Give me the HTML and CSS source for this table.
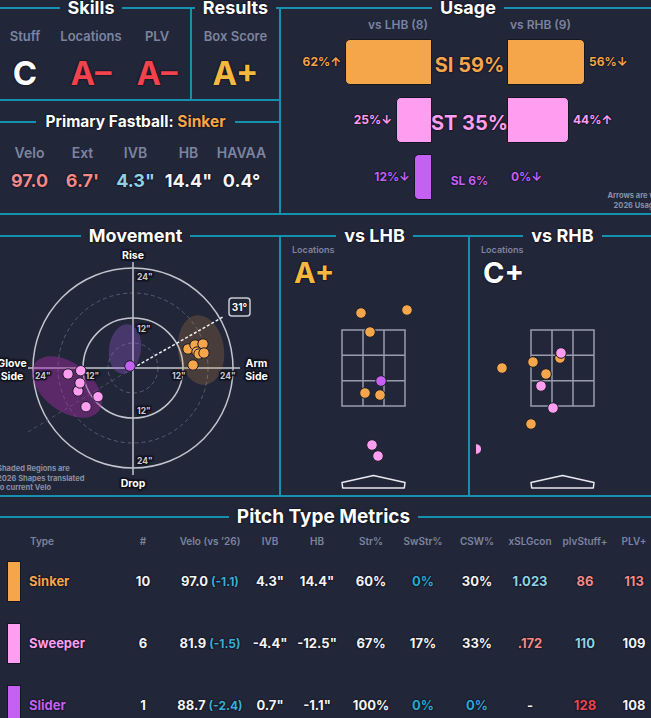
FILE: index.html
```html
<!DOCTYPE html>
<html>
<head>
<meta charset="utf-8">
<title>Pitching Summary</title>
<link rel="stylesheet" href="styles.css">
</head>
<body>
<div class="page">
  <div class="top">
    <div class="leftcol">
      <div class="grades">
        <fieldset class="box skills">
          <legend>Skills</legend>
          <div class="gcols">
            <div class="gcol"><div class="glabel">Stuff</div><div class="grade white">C</div></div>
            <div class="gcol"><div class="glabel">Locations</div><div class="grade red">A–</div></div>
            <div class="gcol"><div class="glabel">PLV</div><div class="grade red">A–</div></div>
          </div>
        </fieldset>
        <fieldset class="box results">
          <legend>Results</legend>
          <div class="gcols">
            <div class="gcol"><div class="glabel">Box Score</div><div class="grade gold">A+</div></div>
          </div>
        </fieldset>
      </div>
      <fieldset class="box primary">
        <legend>Primary Fastball: <span class="or">Sinker</span></legend>
        <div class="fcols">
          <div class="fcol"><div class="flabel">Velo</div><div class="fval salmon">97.0</div></div>
          <div class="fcol"><div class="flabel">Ext</div><div class="fval salmon">6.7'</div></div>
          <div class="fcol"><div class="flabel">IVB</div><div class="fval lblue">4.3"</div></div>
          <div class="fcol"><div class="flabel">HB</div><div class="fval">14.4"</div></div>
          <div class="fcol"><div class="flabel">HAVAA</div><div class="fval">0.4°</div></div>
        </div>
      </fieldset>
    </div>
    <fieldset class="box usage">
      <legend>Usage</legend>
      <div class="ugrid uhead">
        <div class="uside left"><span class="uh">vs LHB (8)</span></div>
        <div></div>
        <div class="uside right"><span class="uh">vs RHB (9)</span></div>
      </div>
      <div class="urows">
        <div class="ugrid urow">
          <div class="uside left"><span class="pct or">62%↑</span><div class="bar lb bg-or" style="width:87px"></div></div>
          <div class="ucenter big or">SI 59%</div>
          <div class="uside right"><div class="bar rb bg-or" style="width:78px"></div><span class="pct or">56%↓</span></div>
        </div>
        <div class="ugrid urow">
          <div class="uside left"><span class="pct pink">25%↓</span><div class="bar lb bg-pink" style="width:36px"></div></div>
          <div class="ucenter big pink">ST 35%</div>
          <div class="uside right"><div class="bar rb bg-pink" style="width:62px"></div><span class="pct pink">44%↑</span></div>
        </div>
        <div class="ugrid urow">
          <div class="uside left"><span class="pct purple">12%↓</span><div class="bar lb bg-purple" style="width:18px"></div></div>
          <div class="ucenter small purple">SL 6%</div>
          <div class="uside right"><div class="bar rb zero"></div><span class="pct purple">0%↓</span><div class="unote">Arrows are vs<br>2026 Usage</div></div>
        </div>
      </div>
    </fieldset>
  </div>

  <div class="mid">
    <fieldset class="box movement">
      <legend>Movement</legend>
      <svg class="mvsvg" width="287" height="249" viewBox="-8 246 287 249">
        <circle cx="133" cy="368" r="100" class="gs"/>
        <circle cx="133" cy="368" r="75" class="gd"/>
        <circle cx="133" cy="368" r="50" class="gs"/>
        <circle cx="133" cy="368" r="25" class="gd"/>
        <line x1="133" y1="262" x2="133" y2="475" class="gs"/>
        <line x1="28" y1="368" x2="240" y2="368" class="gs"/>
        <line x1="28" y1="432" x2="133" y2="368" class="gfaint"/>
        <ellipse cx="67" cy="387" rx="40" ry="24" transform="rotate(37 67 387)" class="sh-st"/>
        <ellipse cx="125" cy="349" rx="16" ry="25" transform="rotate(8 125 349)" class="sh-sl"/>
        <ellipse cx="201" cy="350" rx="23" ry="35" transform="rotate(-8 201 350)" class="sh-si"/>
        <line x1="133" y1="368" x2="223" y2="317" class="dash31"/>
        <rect x="229" y="298" width="21" height="18" rx="3" class="box31"/>
        <text x="239.5" y="310.7" class="t31">31°</text>
        <text x="137" y="280" class="tick">24"</text>
        <text x="137" y="331.5" class="tick">12"</text>
        <text x="137" y="414" class="tick">12"</text>
        <text x="137" y="464" class="tick">24"</text>
        <text x="35" y="379.3" class="tick">24"</text>
        <text x="85.5" y="379.3" class="tick">12"</text>
        <text x="172" y="379.3" class="tick">12"</text>
        <text x="220" y="379.3" class="tick">24"</text>
        <text x="133" y="259.3" class="axl mid-a">Rise</text>
        <text x="133" y="486.5" class="axl mid-a">Drop</text>
        <text x="12" y="366.7" class="axl mid-a">Glove</text>
        <text x="12" y="380" class="axl mid-a">Side</text>
        <text x="256.5" y="366.7" class="axl mid-a">Arm</text>
        <text x="256.5" y="380" class="axl mid-a">Side</text>
        <circle cx="188" cy="349" r="5.2" class="p-or"/>
        <circle cx="195" cy="345" r="5.2" class="p-or"/>
        <circle cx="203" cy="344" r="5.2" class="p-or"/>
        <circle cx="197" cy="352" r="5.2" class="p-or"/>
        <circle cx="199" cy="354" r="5.2" class="p-or"/>
        <circle cx="204" cy="353" r="5.2" class="p-or"/>
        <circle cx="193" cy="365" r="5.2" class="p-or"/>
        <circle cx="68" cy="374" r="5.2" class="p-pink"/>
        <circle cx="80.7" cy="370.7" r="5.2" class="p-pink"/>
        <circle cx="78" cy="391" r="5.2" class="p-pink"/>
        <circle cx="80" cy="383" r="5.2" class="p-pink"/>
        <circle cx="98" cy="396.7" r="5.2" class="p-pink"/>
        <circle cx="86" cy="406.7" r="5.2" class="p-pink"/>
        <circle cx="130" cy="366" r="5.3" class="p-purple"/>
        <text x="-3" y="470.8" class="foot">Shaded Regions are</text>
        <text x="-3" y="480.6" class="foot">2026 Shapes translated</text>
        <text x="-3" y="490.4" class="foot">to current Velo</text>
      </svg>
    </fieldset>
    <fieldset class="box lhb">
      <legend>vs LHB</legend>
      <div class="lochead">
        <div class="loclabel">Locations</div>
        <div class="locgrade gold">A+</div>
      </div>
      <svg class="locsvg" width="187" height="205" viewBox="281 290 187 205">
        <rect x="342" y="331" width="63" height="76" class="zone"/>
        <line x1="363" y1="331" x2="363" y2="407" class="zone"/>
        <line x1="384" y1="331" x2="384" y2="407" class="zone"/>
        <line x1="342" y1="356.3" x2="405" y2="356.3" class="zone"/>
        <line x1="342" y1="381.7" x2="405" y2="381.7" class="zone"/>
        <path d="M342 483.5 L373.5 476.5 L405 483.5 L404.3 489 L342.7 489 Z" class="plate"/>
        <circle cx="361" cy="314" r="5.3" class="p-or"/>
        <circle cx="407" cy="311" r="5.3" class="p-or"/>
        <circle cx="370" cy="333" r="5.3" class="p-or"/>
        <circle cx="365" cy="394" r="5.3" class="p-or"/>
        <circle cx="380" cy="396" r="5.3" class="p-or"/>
        <circle cx="381" cy="382" r="5.3" class="p-purple"/>
        <circle cx="372" cy="446" r="5.3" class="p-pink"/>
        <circle cx="378" cy="457" r="5.3" class="p-pink"/>
      </svg>
    </fieldset>
    <fieldset class="box rhb">
      <legend>vs RHB</legend>
      <div class="lochead">
        <div class="loclabel">Locations</div>
        <div class="locgrade white">C+</div>
      </div>
      <svg class="locsvg" width="185" height="205" viewBox="470 290 185 205">
        <defs><clipPath id="rclip"><rect x="476" y="290" width="179" height="205"/></clipPath></defs>
        <rect x="531" y="331" width="63" height="76" class="zone"/>
        <line x1="552" y1="331" x2="552" y2="407" class="zone"/>
        <line x1="573" y1="331" x2="573" y2="407" class="zone"/>
        <line x1="531" y1="356.3" x2="594" y2="356.3" class="zone"/>
        <line x1="531" y1="381.7" x2="594" y2="381.7" class="zone"/>
        <path d="M531 483.5 L562.5 476.5 L594 483.5 L593.3 489 L531.7 489 Z" class="plate"/>
        <circle cx="502" cy="369" r="5.3" class="p-or"/>
        <circle cx="533" cy="363" r="5.3" class="p-or"/>
        <circle cx="560" cy="359" r="5.3" class="p-or"/>
        <circle cx="546" cy="375" r="5.3" class="p-or"/>
        <circle cx="531" cy="425" r="5.3" class="p-or"/>
        <circle cx="561" cy="354" r="5.3" class="p-pink"/>
        <circle cx="541" cy="387" r="5.3" class="p-pink"/>
        <circle cx="553" cy="409" r="5.3" class="p-pink"/>
        <circle cx="476.3" cy="450" r="5.3" class="p-pink" clip-path="url(#rclip)"/>
      </svg>
    </fieldset>
  </div>

  <fieldset class="box metrics">
    <legend>Pitch Type Metrics</legend>
    <div class="trow thead">
      <div class="c0 hname">Type</div>
      <div class="c">#</div>
      <div class="c">Velo (vs ’26)</div>
      <div class="c">IVB</div>
      <div class="c">HB</div>
      <div class="c">Str%</div>
      <div class="c">SwStr%</div>
      <div class="c">CSW%</div>
      <div class="c">xSLGcon</div>
      <div class="c">plvStuff+</div>
      <div class="c">PLV+</div>
    </div>
    <div class="trow tbody">
      <div class="c0"><span class="sw bg-or"></span><span class="tname or">Sinker</span></div>
      <div class="c">10</div>
      <div class="c">97.0<span class="dv">(-1.1)</span></div>
      <div class="c">4.3"</div>
      <div class="c">14.4"</div>
      <div class="c">60%</div>
      <div class="c cyan">0%</div>
      <div class="c">30%</div>
      <div class="c lblue">1.023</div>
      <div class="c salmon">86</div>
      <div class="c salmon">113</div>
    </div>
    <div class="trow tbody">
      <div class="c0"><span class="sw bg-pink"></span><span class="tname pink">Sweeper</span></div>
      <div class="c">6</div>
      <div class="c">81.9<span class="dv">(-1.5)</span></div>
      <div class="c">-4.4"</div>
      <div class="c">-12.5"</div>
      <div class="c">67%</div>
      <div class="c">17%</div>
      <div class="c">33%</div>
      <div class="c salmon">.172</div>
      <div class="c lblue">110</div>
      <div class="c">109</div>
    </div>
    <div class="trow tbody">
      <div class="c0"><span class="sw bg-purple"></span><span class="tname purple">Slider</span></div>
      <div class="c">1</div>
      <div class="c">88.7<span class="dv">(-2.4)</span></div>
      <div class="c">0.7"</div>
      <div class="c">-1.1"</div>
      <div class="c">100%</div>
      <div class="c cyan">0%</div>
      <div class="c cyan">0%</div>
      <div class="c">-</div>
      <div class="c red">128</div>
      <div class="c">108</div>
    </div>
  </fieldset>
</div>
</body>
</html>
```

FILE: styles.css
```css
* { box-sizing: border-box; }
html, body { margin: 0; padding: 0; }
body {
  width: 651px;
  height: 718px;
  overflow: hidden;
  background: #222639;
  color: #f4f4f7;
  font-family: Inter, "Noto Sans", sans-serif;
  font-weight: 700;
  text-shadow: 0 0 1.5px #0a0b12, 0 0 1.5px #0a0b12;
}
.page { margin: -2px 0 0 -10px; width: 667px; }

.box { border: 2px solid #1590ae; margin: 0; padding: 0; min-width: 0; }
.box > legend {
  margin: 0 auto;
  padding: 0 8px;
  font-size: 18px;
  line-height: 20px;
  font-weight: 700;
  color: #fff;
}

/* colours */
.or { color: #f5a54a; }
.gold { color: #f6b73f; }
.red { color: #f0434d; }
.white { color: #fff; }
.salmon { color: #f28a8a; }
.lblue { color: #8fd2e4; }
.cyan { color: #2aa7d0; }
.pink { color: #ff9ef0; }
.purple { color: #c460f2; }
.bg-or { background: #f5a54a; }
.bg-pink { background: #ff9ef0; }
.bg-purple { background: #c460f2; }

/* top */
.top { display: grid; grid-template-columns: 289px 378px; }
.leftcol { display: flex; flex-direction: column; gap: 12px; }
.grades { display: grid; grid-template-columns: 202px 87px; height: 103px; }
.skills { height: 103px; }
.results { height: 103px; border-left: none; border-right: none; }
.primary { height: 102px; border-right: none; }
.primary > legend { font-size: 15.5px; line-height: 18px; padding: 0 10px; }
.usage { height: 217px; }

.gcols { display: flex; padding-top: 11px; }
.gcol { flex: 1; display: flex; flex-direction: column; align-items: center; }
.glabel, .flabel, .uh, .loclabel, .thead, .foot {
  color: #7c849f;
  text-shadow: none;
}
.glabel { font-size: 13px; line-height: 14px; font-weight: 600; }
.grade { font-size: 33px; line-height: 40px; margin-top: 9.5px; }

.fcols { display: flex; justify-content: center; padding-top: 14px; }
.fcol { width: 53px; display: flex; flex-direction: column; align-items: center; }
.flabel { font-size: 14px; line-height: 16px; font-weight: 600; }
.fval { font-size: 18px; line-height: 22px; margin-top: 9px; white-space: nowrap; }

/* usage */
.ugrid { display: grid; grid-template-columns: 151px 75px 1fr; }
.uside { display: flex; align-items: center; gap: 4px; }
.uside.left { justify-content: flex-end; }
.uside.right { justify-content: flex-start; }
.uhead .uside.left { padding-right: 4px; }
.uhead .uside.right { padding-left: 3px; }
.uh { font-size: 12px; line-height: 14px; font-weight: 600; }
.urows { margin-top: 7px; display: flex; flex-direction: column; gap: 11.5px; }
.urow { height: 46px; }
.bar { height: 46px; border: 1px solid #141622; }
.bar.lb { border-radius: 5px 0 0 5px; }
.bar.rb { border-radius: 0 5px 5px 0; }
.bar.zero { width: 0; border: none; }
.pct { font-size: 12px; line-height: 14px; white-space: nowrap; }
.ucenter { display: flex; align-items: center; justify-content: center; white-space: nowrap; }
.ucenter.big { font-size: 20px; padding-top: 6px; }
.ucenter.small { font-size: 12px; padding-top: 7px; }
.unote {
  margin-left: auto;
  align-self: flex-end;
  margin-bottom: -11px;
  margin-right: -3px;
  text-align: right;
  font-size: 7.5px;
  line-height: 10px;
  color: #8a8fa2;
  text-shadow: none;
  white-space: nowrap;
}

/* middle */
.mid { display: grid; grid-template-columns: 291px 189px 187px; margin-top: 11px; height: 271px; }
.movement, .lhb, .rhb { height: 271px; }
.lhb, .rhb { border-left: none; }
.mvsvg, .locsvg { display: block; }

.gs { fill: none; stroke: #c3c5ce; stroke-width: 1.5; }
.gd { fill: none; stroke: #575c70; stroke-width: 1; stroke-dasharray: 4 3; }
.gfaint { stroke: #4a4f63; stroke-width: 1; stroke-dasharray: 4 3; }
.sh-st { fill: #a32fa1; opacity: .45; }
.sh-sl { fill: #a060e0; opacity: .3; }
.sh-si { fill: #f5a54a; opacity: .19; }
.dash31 { stroke: #f0f0f4; stroke-width: 1.5; stroke-dasharray: 3 2; }
.box31 { fill: #222639; stroke: #c8cad2; stroke-width: 1.5; }
.t31 { fill: #fff; font-size: 10px; font-weight: 700; text-anchor: middle; }
.tick {
  fill: #c9cbd3; font-size: 8.5px; font-weight: 700;
  paint-order: stroke; stroke: #191b27; stroke-width: 2px; stroke-linejoin: round;
}
.axl {
  fill: #fff; font-size: 10.5px; font-weight: 700;
  paint-order: stroke; stroke: #191b27; stroke-width: 2px; stroke-linejoin: round;
}
.mid-a { text-anchor: middle; }
.foot { fill: #8a8fa2; font-size: 7.5px; font-weight: 700; }
.p-or { fill: #f5a54a; stroke: #1b1d29; stroke-width: 1; }
.p-pink { fill: #ff9ef0; stroke: #1b1d29; stroke-width: 1; }
.p-purple { fill: #c460f2; stroke: #1b1d29; stroke-width: 1; }

.lochead { height: 44px; padding-left: 11px; }
.loclabel { font-size: 9px; line-height: 10px; font-weight: 600; margin-top: -1px; }
.locgrade { font-size: 29px; line-height: 32px; margin-top: 1.5px; margin-left: 2px; }
.zone { fill: none; stroke: #9a9cab; stroke-width: 1.5; }
.plate { fill: none; stroke: #e8e8ee; stroke-width: 1.5; stroke-linejoin: round; }

/* table */
.metrics { margin-top: 10px; height: 230px; border-bottom: none; }
.metrics > legend { font-size: 19px; }
.trow {
  display: grid;
  grid-template-columns: 117px 68px 66px 54px 40px 68px 36px 72px 34px 76px 22px;
}
.thead { margin-top: 8px; margin-bottom: 3px; height: 12px; font-size: 10px; line-height: 12px; font-weight: 600; }
.tbody { height: 62px; font-size: 13px; }
.c { display: flex; justify-content: center; align-items: center; white-space: nowrap; }
.c0 { display: flex; align-items: center; }
.hname { padding-left: 38px; }
.sw { width: 14px; height: 41px; margin-left: 15px; border: 1px solid #141622; }
.tname { margin-left: 8px; }
.dv { color: #3aaed6; font-size: 12px; margin-left: 3px; }
```
